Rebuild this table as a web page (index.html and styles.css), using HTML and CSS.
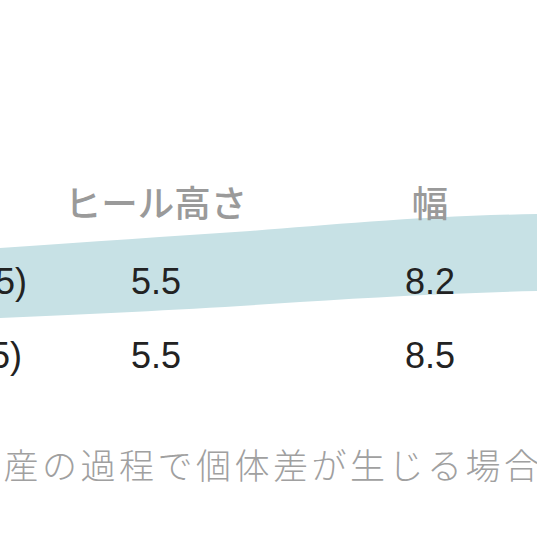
FILE: index.html
```html
<!DOCTYPE html>
<html lang="ja">
<head>
    <meta charset="UTF-8">
    <meta name="viewport" content="width=device-width, initial-scale=1.0">
    <title>サイズ表</title>
    <link rel="stylesheet" href="styles.css">
</head>
<body>
    <main class="sheet">
        <!-- 蛍光ペンのマーカー -->
        <svg class="marker" width="537" height="537" viewBox="0 0 537 537" aria-hidden="true">
            <path d="M0,248 C90,242 170,236 250,231 C330,225 420,216 537,214 L537,291 C450,293 380,297 300,302 C200,309 110,313 0,318 Z" fill="#c7e1e5"/>
        </svg>

        <div class="size-table">
            <div class="row head">
                <div class="cell first">サイズ</div>
                <div class="cell">ヒール高さ</div>
                <div class="cell">幅</div>
            </div>
            <div class="row">
                <div class="cell first">(24.5)</div>
                <div class="cell">5.5</div>
                <div class="cell">8.2</div>
            </div>
            <div class="row">
                <div class="cell first short">(25)</div>
                <div class="cell">5.5</div>
                <div class="cell">8.5</div>
            </div>
        </div>

        <p class="note">生産の過程で個体差が生じる場合があります。</p>
    </main>
</body>
</html>
```

FILE: styles.css
```css
body {
    margin: 0;
    background: #fff;
    overflow: hidden;
}
.sheet {
    position: relative;
    width: 537px;
    height: 537px;
    overflow: hidden;
    padding-top: 184px;
    box-sizing: border-box;
}
.marker {
    position: absolute;
    top: 0;
    left: 0;
    z-index: 0;
}
.size-table {
    position: relative;
    z-index: 1;
    margin-left: -130px;
}
.row {
    display: grid;
    grid-template-columns: 160px 252px 296px;
    height: 74px;
    font-family: "Liberation Sans", Arial, sans-serif;
    font-size: 36px;
    line-height: 74px;
    color: #222;
}
.row.head {
    height: 61px;
    font-family: "Noto Sans CJK JP", sans-serif;
    font-size: 36.5px;
    font-weight: 500;
    line-height: 36.5px;
    color: #9a9a9a;
}
.cell {
    text-align: center;
    white-space: nowrap;
}
.cell.first {
    text-align: right;
    padding-right: 3px;
}
.head .cell.first {
    visibility: hidden;
}
.cell.first.short {
    padding-right: 8px;
}
.note {
    position: relative;
    z-index: 1;
    margin: 53px 0 0 -35px;
    font-family: "Noto Sans CJK JP", sans-serif;
    font-size: 35px;
    font-weight: 300;
    line-height: 35px;
    letter-spacing: 3.5px;
    color: #a0a0a0;
    white-space: nowrap;
}
```
